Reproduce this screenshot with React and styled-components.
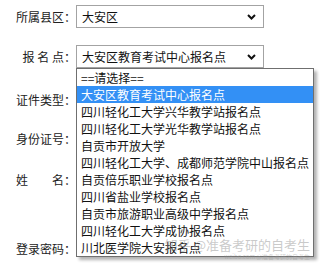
import React from "react";
import styled, { createGlobalStyle } from "styled-components";

const options = [
  "==请选择==",
  "大安区教育考试中心报名点",
  "四川轻化工大学兴华教学站报名点",
  "四川轻化工大学光华教学站报名点",
  "自贡市开放大学",
  "四川轻化工大学、成都师范学院中山报名点",
  "自贡倍乐职业学校报名点",
  "四川省盐业学校报名点",
  "自贡市旅游职业高级中学报名点",
  "四川轻化工大学成协报名点",
  "川北医学院大安报名点",
];

const Chevron = () => (
  <svg width="9" height="6" viewBox="0 0 9 6">
    <path d="M1 1 L4.5 4.5 L8 1" fill="none" stroke="#111" strokeWidth="2" />
  </svg>
);

const App = () => {
  return (
    <>
      <GlobalStyle />
      <Form>
        <Row>
          <Label>所属县区：</Label>
          <Select>
            <span>大安区</span>
            <Chevron />
          </Select>
        </Row>
        <Row $top={17}>
          <Label>报 名 点：</Label>
          <SelectWrap>
            <Select>
              <span>大安区教育考试中心报名点</span>
              <Chevron />
            </Select>
            <Dropdown>
              {options.map((o, i) => (
                <Option key={o} $active={i === 1}>
                  {o}
                </Option>
              ))}
            </Dropdown>
          </SelectWrap>
        </Row>
        <Row $top={20}>
          <Label>证件类型：</Label>
        </Row>
        <Row $top={16}>
          <Label>身份证号：</Label>
        </Row>
        <Row $top={18}>
          <Label>姓　　名：</Label>
        </Row>
        <Row $top={46}>
          <Label>登录密码：</Label>
        </Row>
      </Form>
      <Watermark>
        <span>知乎 @准备考研的自考生</span>
        <small>weibo.com @准备考研的自考生</small>
      </Watermark>
    </>
  );
};

const GlobalStyle = createGlobalStyle`
  body {
    margin: 0;
    background: #fff;
    font-family: "Noto Sans CJK SC", "Noto Sans", sans-serif;
    font-size: 12px;
    color: #111;
  }
`;

const Form = styled.div`
  display: flex;
  flex-direction: column;
  padding-top: 5px;
  width: 320px;
  height: 273px;
  box-sizing: border-box;
  overflow: hidden;
`;

const Row = styled.div`
  display: flex;
  align-items: center;
  height: 23px;
  margin-top: ${({ $top }) => $top || 0}px;
`;

const Label = styled.div`
  width: 76px;
  text-align: right;
  white-space: pre;
  color: #222;
  line-height: 23px;
`;

const SelectWrap = styled.div`
  position: relative;
`;

const Select = styled.div`
  display: flex;
  align-items: center;
  justify-content: space-between;
  width: 188px;
  height: 23px;
  box-sizing: border-box;
  border: 1px solid #a3a3a3;
  background: #fff;
  padding: 0 7px 0 5px;
  color: #111;
`;

const Dropdown = styled.div`
  position: absolute;
  top: 23px;
  left: 0;
  width: 236px;
  border: 1px solid #6f6f6f;
  background: #fff;
  box-shadow: 3px 3px 3px rgba(0, 0, 0, 0.3);
  z-index: 2;
`;

const Option = styled.div`
  height: 17px;
  line-height: 17px;
  padding-left: 4px;
  white-space: nowrap;
  background: ${({ $active }) => ($active ? "#3390f5" : "#fff")};
  color: ${({ $active }) => ($active ? "#fff" : "#111")};
`;

const Watermark = styled.div`
  position: absolute;
  right: 10px;
  top: 237px;
  display: flex;
  flex-direction: column;
  align-items: flex-end;
  white-space: nowrap;
  z-index: 3;
  pointer-events: none;
  span {
    font-size: 13px;
    line-height: 16px;
    color: rgba(150, 150, 150, 0.5);
  }
  small {
    font-size: 6px;
    line-height: 8px;
    color: rgba(150, 150, 150, 0.45);
  }
`;

export default App;
